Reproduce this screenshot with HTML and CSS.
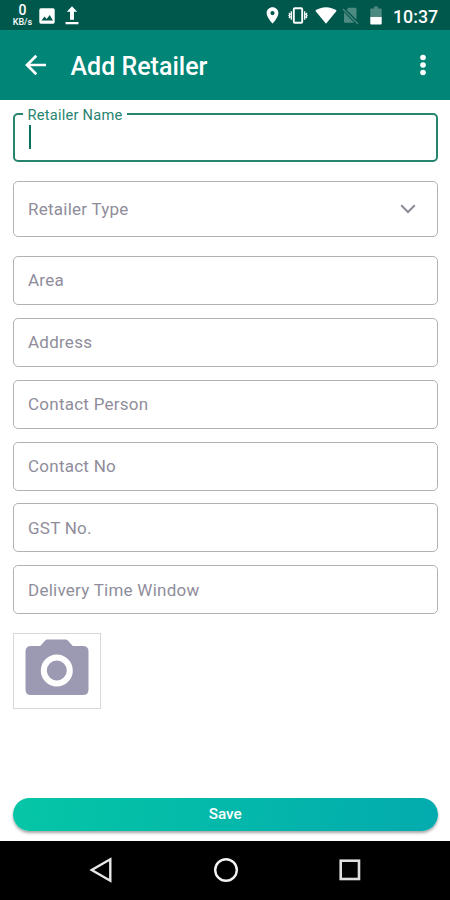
FILE: index.html
```html
<!DOCTYPE html>
<html lang="en">
<head>
<meta charset="utf-8">
<title>Add Retailer</title>
<link rel="stylesheet" href="styles.css">
</head>
<body>
<div class="screen">
  <div class="status">
    <div class="speed"><span class="speed-num">0</span><span class="speed-unit">KB/s</span></div>
    <svg class="st-image" width="16" height="16" viewBox="0 0 16 16"><rect x=".3" y=".3" width="15.4" height="15.4" rx="1.6" fill="#fff"/><path d="M2.500 12.500l3-4 2.200 2.600 3-4 3.300 5.400z" fill="#00574b"/></svg>
    <svg class="st-upload" width="14" height="19" viewBox="0 0 14 19" fill="#fff"><path d="M7 .3l5.200 5.400H9v8H5v-8H1.800zM.5 16h13v2.300H.5z"/></svg>
    <div class="spacer"></div>
    <svg class="st-pin" width="13" height="17" viewBox="0 0 13 17"><path d="M6.500 .3C3.200 .3.600 2.900.600 6.100c0 4.300 5.900 10.600 5.900 10.600s5.900-6.300 5.900-10.600C12.400 2.900 9.800.300 6.500.300z" fill="#fff"/><circle cx="6.500" cy="6.100" r="2.100" fill="#00574b"/></svg>
    <svg class="st-vibrate" width="20" height="17" viewBox="0 0 20 17" fill="none" stroke="#fff"><rect x="5.800" y="1.300" width="8.400" height="14.400" rx="1" stroke-width="1.900"/><path d="M3.300 4.200v8.600M16.700 4.200v8.600M1 6l1 1.300-1 1.300 1 1.300-1 1.300M19 6l-1 1.300 1 1.300-1 1.300 1 1.300" stroke-width="1.300"/></svg>
    <svg class="st-wifi" width="22" height="17" viewBox="0 0 22 17"><path d="M11 16.700L.300 3.700C3.200 1.500 7 .300 11 .300s7.800 1.200 10.700 3.400z" fill="#fff"/></svg>
    <svg class="st-sim" width="17" height="18" viewBox="0 0 17 18"><path d="M6.500 .7h7q1 0 1 1v10.800L4.500 2.700zM2 5.200L12.200 15.700H3q-1 0-1-1z" fill="#4d8a82"/><path d="M1 2l15 15" stroke="#4d8a82" stroke-width="1.300"/></svg>
    <svg class="st-battery" width="12" height="19" viewBox="0 0 12 19"><path d="M4 .5h4v2h3q.7 0 .7.700V11H.300V3.200q0-.7.700-.7h3z" fill="#4d8a82"/><path d="M.300 11h11.400v6.500q0 1-1 1H1.300q-1 0-1-1z" fill="#fff"/></svg>
    <span class="clock">10:37</span>
  </div>
  <header class="appbar">
    <svg class="back" width="22" height="22" viewBox="0 0 22 22" fill="none" stroke="#fff" stroke-width="2.700"><path d="M21 11H2.800M11.300 1.700L2 11l9.300 9.300"/></svg>
    <h1>Add Retailer</h1>
    <svg width="8" height="22" viewBox="0 0 8 22" fill="#fff"><circle cx="4" cy="3.500" r="2.800"/><circle cx="4" cy="11" r="2.800"/><circle cx="4" cy="18.500" r="2.800"/></svg>
  </header>
  <main class="form">
    <div class="field active"><span class="label">Retailer Name</span><span class="caret"></span></div>
    <div class="field select"><span>Retailer Type</span><svg width="16" height="10" viewBox="0 0 16 10" fill="none" stroke="#8c8c98" stroke-width="2"><path d="M1.200 1.200L8 8l6.800-6.800"/></svg></div>
    <div class="fields">
      <div class="field">Area</div>
      <div class="field">Address</div>
      <div class="field">Contact Person</div>
      <div class="field">Contact No</div>
      <div class="field">GST No.</div>
      <div class="field">Delivery Time Window</div>
    </div>
    <div class="photo"><svg width="64" height="57" viewBox="0 0 64 57"><path d="M22.500 .500h18q1.500 0 2.500 1.200l4.800 5.300H58q5.500 0 5.500 5.500v38q0 5.500-5.500 5.500H6q-5.500 0-5.500-5.500v-38Q.500 7 6 7h9.200L20 1.700Q21 .500 22.500 .500z" fill="#9c9ab3"/><circle cx="31.800" cy="31.500" r="13" fill="none" stroke="#fff" stroke-width="6"/></svg></div>
    <div class="save">Save</div>
  </main>
  <nav class="nav">
    <svg width="24" height="26" viewBox="0 0 24 26" fill="none" stroke="#e8e8e8" stroke-width="2.400"><path d="M21.300 2.300v21.400L2.700 13z"/></svg>
    <svg width="26" height="26" viewBox="0 0 26 26" fill="none" stroke="#f2f2f2" stroke-width="2.400"><circle cx="13" cy="13" r="10.800"/></svg>
    <svg width="24" height="26" viewBox="0 0 24 26" fill="none" stroke="#dedede" stroke-width="2.600"><rect x="2.700" y="3.700" width="18.300" height="18.300"/></svg>
  </nav>
</div>
</body>
</html>
```
FILE: styles.css
```css
* { box-sizing: border-box; }
body { margin: 0; background: #fff; font-family: Roboto, "Liberation Sans", sans-serif; }
svg { display: block; flex: none; }
.screen { width: 450px; height: 900px; display: flex; flex-direction: column; overflow: hidden; }
.status { height: 30px; flex: none; background: #00574b; color: #fff; display: flex; align-items: flex-start; padding: 0 12px 0 12px; }
.speed { width: 21px; padding-top: 3px; display: flex; flex-direction: column; align-items: center; font-weight: 500; }
.speed-num { font-size: 14px; line-height: 15px; }
.speed-unit { font-size: 9px; line-height: 9px; }
.st-image { margin: 7.500px 0 0 6px; }
.st-upload { margin: 6px 0 0 10px; }
.spacer { flex: 1; }
.st-pin { margin: 7px 9px 0 0; }
.st-vibrate { margin: 7px 7px 0 0; }
.st-wifi { margin: 7px 5px 0 0; }
.st-sim { margin: 7px 11px 0 0; }
.st-battery { margin: 6px 11px 0 0; }
.clock { width: 45px; padding-top: 6px; font-size: 17.800px; line-height: 21px; font-weight: 500; white-space: nowrap; }
.appbar { height: 70.400px; flex: none; background: #008577; color: #fff; display: flex; align-items: center; padding: 0 23px 0 25px; }
.appbar h1 { flex: 1; margin: 4px 0 0 23.500px; font-size: 25px; line-height: 30px; font-weight: 500; }
.form { flex: 1; padding: 13.100px 12px 0 12.500px; display: flex; flex-direction: column; }
.field { height: 49px; flex: none; border: 1.500px solid #b2b2b2; border-radius: 5px; padding: 0 0 0 14.500px; display: flex; align-items: center; font-size: 17px; letter-spacing: .25px; color: #8f8d9b; }
.field.active { position: relative; border: 2px solid #27846f; }
.label { position: absolute; left: 8px; top: -8px; padding: 0 5px; background: #fff; color: #27846f; font-size: 14.600px; line-height: 16px; }
.caret { width: 2px; height: 24px; background: #08705d; margin-bottom: 1px; }
.select { height: 56px; margin-top: 19px; justify-content: space-between; padding-right: 21px; }
.fields { margin-top: 18.500px; display: grid; gap: 12.850px; }
.photo { width: 88px; height: 76px; margin-top: 18.800px; border: 1.500px solid #d8d8da; display: flex; justify-content: center; padding-top: 5px; }
.save { height: 33.500px; margin-top: 88.700px; border-radius: 17px; background: linear-gradient(100deg, #05c6a6, #03abae); box-shadow: 0 2px 3px rgba(0, 0, 0, .35); color: #fff; display: flex; align-items: center; justify-content: center; font-size: 15.300px; font-weight: 500; }
.nav { height: 59.500px; flex: none; background: #000; display: flex; align-items: center; justify-content: space-between; padding: 0 88px 0 89px; }
```
